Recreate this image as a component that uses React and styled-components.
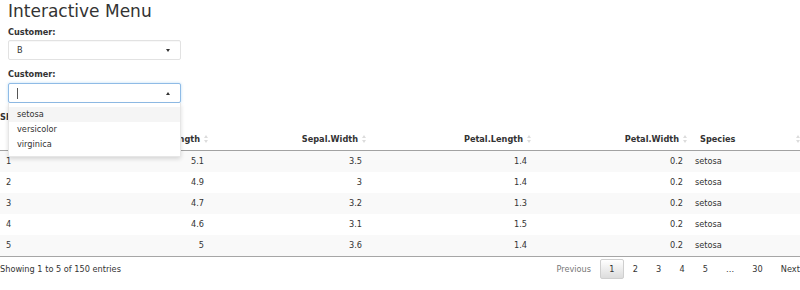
import React from 'react';
import styled, { createGlobalStyle } from 'styled-components';

const GlobalStyle = createGlobalStyle`
  html, body {
    margin: 0;
    padding: 0;
    overflow: hidden;
    background: #fff;
  }
  body {
    font-family: "DejaVu Sans", "Liberation Sans", sans-serif;
    color: #333;
    font-size: 8.2px;
  }
`;

const Page = styled.div`
  width: 800px;
  height: 290px;
  position: relative;
`;

const Controls = styled.div`
  padding-left: 8px;
`;

const Title = styled.h1`
  margin: 0 0 4px;
  font-size: 17px;
  font-weight: 400;
  line-height: 22px;
  color: #333;
`;

const Group = styled.div`
  width: 173px;
  margin-bottom: 8px;
  position: relative;
`;

const Label = styled.div`
  font-weight: 700;
  font-size: 8.2px;
  line-height: 12px;
  margin-bottom: ${({ $gap }) => $gap || 2}px;
`;

const SelectBox = styled.div`
  box-sizing: border-box;
  height: 20px;
  display: flex;
  align-items: center;
  padding: 0 10px 0 8px;
  border: 1px solid ${({ $focused }) => ($focused ? '#8fbbe6' : '#e2e2e2')};
  border-radius: 2px;
  background: #fff;
  box-shadow: ${({ $focused }) =>
    $focused ? '0 0 3px rgba(102, 175, 233, 0.45)' : 'inset 0 1px 1px rgba(0,0,0,0.03)'};
`;

const Value = styled.span`
  flex: 1;
  font-size: 8.2px;
  color: #333;
`;

const Cursor = styled.span`
  display: block;
  width: 1px;
  height: 11px;
  background: #555;
  flex: none;
  margin-right: auto;
`;

const Caret = styled.span`
  width: 0;
  height: 0;
  border-left: 2.5px solid transparent;
  border-right: 2.5px solid transparent;
  ${({ $up }) =>
    $up ? 'border-bottom: 3px solid #333;' : 'border-top: 3px solid #333;'}
`;

const Dropdown = styled.div`
  position: absolute;
  left: 0;
  right: 0;
  top: 100%;
  z-index: 5;
  box-sizing: border-box;
  background: #fff;
  border: 1px solid #e6e6e6;
  border-top: none;
  border-radius: 0 0 2px 2px;
  box-shadow: 0 2px 4px rgba(0, 0, 0, 0.14);
  padding: 4px 0 4px;
`;

const Option = styled.div`
  height: 15px;
  line-height: 15px;
  padding-left: 8px;
  font-size: 8.2px;
  color: #333;
  background: ${({ $active }) => ($active ? '#f5f5f5' : 'transparent')};
`;

const TableLabel = styled.div`
  font-weight: 700;
  font-size: 8.2px;
  line-height: 12px;
  margin-top: 6px;
  height: 17px;
`;

const Table = styled.table`
  border-collapse: collapse;
  table-layout: fixed;
  width: 802px;
  font-size: 8.2px;
`;

const Th = styled.th`
  position: relative;
  height: 22px;
  box-sizing: border-box;
  padding: 0 ${({ $left }) => ($left ? '12px' : '10px')} 0
    ${({ $left }) => ($left ? '11px' : '6px')};
  text-align: ${({ $left }) => ($left ? 'left' : 'right')};
  font-weight: 700;
  color: #333;
  border-bottom: 1px solid rgba(0, 0, 0, 0.35);
  white-space: nowrap;
  overflow: hidden;
`;

const SortIcon = styled.svg`
  position: absolute;
  right: 2px;
  top: 50%;
  margin-top: -4px;
`;

const Tr = styled.tr`
  background: ${({ $odd }) => ($odd ? '#f9f9f9' : '#fff')};
  & + & td {
    border-top: 1px solid #e4e4e4;
  }
  &:last-child td {
    border-bottom: 1px solid rgba(0, 0, 0, 0.35);
  }
`;

const Td = styled.td`
  height: 21px;
  padding: 0 6px;
  text-align: ${({ $left }) => ($left ? 'left' : 'right')};
  color: #333;
  white-space: nowrap;
`;

const Footer = styled.div`
  width: 809px;
  margin-top: 2px;
  height: 20px;
  display: flex;
  align-items: center;
  justify-content: space-between;
`;

const Info = styled.div`
  font-size: 8.2px;
  color: #333;
`;

const Pager = styled.div`
  display: flex;
  align-items: center;
  height: 20px;
`;

const PageButton = styled.span`
  box-sizing: border-box;
  height: 20px;
  line-height: 18px;
  padding: 0 ${({ $pad }) => $pad || 8.1}px;
  font-size: 8.2px;
  color: ${({ $disabled }) => ($disabled ? '#777' : '#333')};
  border: 1px solid transparent;
  border-radius: 2px;
  ${({ $current }) =>
    $current &&
    `
    border-color: #cfcfcf;
    background: linear-gradient(to bottom, #ffffff 0%, #dcdcdc 100%);
  `}
`;

const Sort = () => (
  <SortIcon width="4" height="8" viewBox="0 0 4 8">
    <path d="M2 0 L4 3 L0 3 Z" fill="#dcdcdc" />
    <path d="M2 8 L4 5 L0 5 Z" fill="#dcdcdc" />
  </SortIcon>
);

const columns = [
  { key: 'n', label: '', width: 40, left: true, sort: false },
  { key: 'sl', label: 'Sepal.Length', width: 170 },
  { key: 'sw', label: 'Sepal.Width', width: 158 },
  { key: 'pl', label: 'Petal.Length', width: 165 },
  { key: 'pw', label: 'Petal.Width', width: 156 },
  { key: 'sp', label: 'Species', width: 113, left: true },
];

const rows = [
  ['1', '5.1', '3.5', '1.4', '0.2', 'setosa'],
  ['2', '4.9', '3', '1.4', '0.2', 'setosa'],
  ['3', '4.7', '3.2', '1.3', '0.2', 'setosa'],
  ['4', '4.6', '3.1', '1.5', '0.2', 'setosa'],
  ['5', '5', '3.6', '1.4', '0.2', 'setosa'],
];

const App = () => {
  return (
    <Page>
      <GlobalStyle />
      <Controls>
        <Title>Interactive Menu</Title>
        <Group>
          <Label>Customer:</Label>
          <SelectBox>
            <Value>B</Value>
            <Caret />
          </SelectBox>
        </Group>
        <Group>
          <Label $gap={3}>Customer:</Label>
          <SelectBox $focused>
            <Cursor />
            <Caret $up />
          </SelectBox>
          <Dropdown>
            <Option $active>setosa</Option>
            <Option>versicolor</Option>
            <Option>virginica</Option>
          </Dropdown>
        </Group>
      </Controls>
      <TableLabel>Show</TableLabel>
      <Table>
        <colgroup>
          {columns.map((c) => (
            <col key={c.key} style={{ width: c.width }} />
          ))}
        </colgroup>
        <thead>
          <tr>
            {columns.map((c) => (
              <Th key={c.key} $left={c.left && c.key !== 'n'}>
                {c.label}
                {c.sort !== false && <Sort />}
              </Th>
            ))}
          </tr>
        </thead>
        <tbody>
          {rows.map((r, i) => (
            <Tr key={r[0]} $odd={i % 2 === 0}>
              {r.map((v, j) => (
                <Td key={j} $left={columns[j].left}>
                  {v}
                </Td>
              ))}
            </Tr>
          ))}
        </tbody>
      </Table>
      <Footer>
        <Info>Showing 1 to 5 of 150 entries</Info>
        <Pager>
          <PageButton $disabled>Previous</PageButton>
          <PageButton $current>1</PageButton>
          <PageButton>2</PageButton>
          <PageButton>3</PageButton>
          <PageButton>4</PageButton>
          <PageButton>5</PageButton>
          <PageButton $pad={7.9}>…</PageButton>
          <PageButton>30</PageButton>
          <PageButton>Next</PageButton>
        </Pager>
      </Footer>
    </Page>
  );
};

export default App;
